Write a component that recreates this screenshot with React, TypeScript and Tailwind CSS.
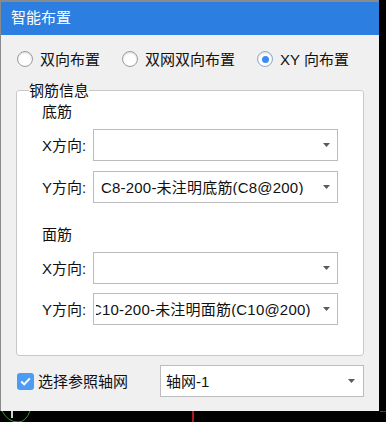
import React from "react";

const font = { fontFamily: '"Liberation Sans", "Noto Sans CJK SC", sans-serif' };

function Arrow() {
  return (
    <svg width="7" height="4" viewBox="0 0 7 4" className="shrink-0">
      <path d="M0 0 L7 0 L3.5 4 Z" fill="#5a5a5a" />
    </svg>
  );
}

function Select({ value, clip }: { value?: string; clip?: boolean }) {
  return (
    <div className="flex h-[32px] w-[245px] items-center border border-[#bcbcbc] bg-white pr-[7px]">
      <div className={`flex-1 overflow-hidden whitespace-nowrap text-[15px] leading-none tracking-[0.2px] text-[#111] ${clip ? "ml-[2px]" : "pl-[7px]"}`}>
        <span className={clip ? "-ml-[5px] inline-block" : ""}>{value}</span>
      </div>
      <Arrow />
    </div>
  );
}

function Radio({ checked, label, className }: { checked?: boolean; label: string; className?: string }) {
  return (
    <div className={`flex items-center gap-[7px] ${className ?? ""}`}>
      <div
        className={`flex h-[16px] w-[16px] items-center justify-center rounded-full border bg-white shadow-[inset_0_1px_2px_rgba(0,0,0,0.15)] ${
          checked ? "border-[#8fa9c9]" : "border-[#9c9c9c]"
        }`}
      >
        {checked && <div className="h-[7px] w-[7px] rounded-full bg-[#3b8cf2]" />}
      </div>
      <span className="text-[15px] leading-none text-[#111]">{label}</span>
    </div>
  );
}

function Row({ label, value, clip }: { label: string; value?: string; clip?: boolean }) {
  return (
    <div className="flex items-center">
      <span className="w-[51px] text-[15px] leading-none text-[#111]">{label}</span>
      <Select value={value} clip={clip} />
    </div>
  );
}

export default function App() {
  return (
    <div className="relative h-[422px] w-[386px] overflow-hidden bg-black" style={font}>
      <div className="flex h-[411px] w-[379px] flex-col border-l border-[#8a8a8a] bg-[#f0f0f0]">
        <div className="h-[2px] bg-[#8a8a8a]" />
        <div className="flex h-[33px] items-center bg-[#2c7fe0] pl-[10px] text-[15px] text-white">智能布置</div>
        <div className="flex h-[48px] items-center pl-[16px]">
          <Radio label="双向布置" />
          <Radio label="双网双向布置" className="ml-[22px]" />
          <Radio checked label="XY 向布置" className="ml-[22px]" />
        </div>
        <fieldset className="ml-[15px] h-[273px] w-[348px] rounded-[3px] border border-[#c9c9c9] bg-white pl-[25px]">
          <legend className="-ml-[13px] bg-transparent px-0 text-[15px] leading-none text-[#111]">钢筋信息</legend>
          <div className="flex flex-col">
            <div className="mt-[6px] text-[15px] leading-none text-[#111]">底筋</div>
            <div className="mt-[10px] flex flex-col gap-[10px]">
              <Row label="X方向:" />
              <Row label="Y方向:" value="C8-200-未注明底筋(C8@200)" />
            </div>
            <div className="mt-[24px] text-[15px] leading-none text-[#111]">面筋</div>
            <div className="mt-[10px] flex flex-col gap-[9px]">
              <Row label="X方向:" />
              <Row label="Y方向:" value="C10-200-未注明面筋(C10@200)" clip />
            </div>
          </div>
        </fieldset>
        <div className="mt-[9px] flex items-center pl-[16px]">
          <div className="flex h-[17px] w-[17px] items-center justify-center rounded-[3px] bg-[#4c9cf3]">
            <svg width="11" height="9" viewBox="0 0 11 9">
              <path d="M1.2 4.6 L4.2 7.4 L9.8 1.4" fill="none" stroke="white" strokeWidth="2" />
            </svg>
          </div>
          <span className="ml-[4px] text-[15px] leading-none text-[#111]">选择参照轴网</span>
          <div className="ml-[32px] flex h-[32px] w-[204px] items-center border border-[#bcbcbc] bg-white pl-[5px] pr-[8px]">
            <span className="flex-1 text-[15px] leading-none text-[#111]">轴网-1</span>
            <Arrow />
          </div>
        </div>
      </div>
      <svg className="absolute left-0 top-[411px]" width="386" height="11" viewBox="0 0 386 11">
        <path d="M2 0 Q8 11 18 11 Q26 11 30 0" fill="none" stroke="#2f9a2f" strokeWidth="1" />
        <line x1="12" y1="0" x2="12" y2="7" stroke="#d0d0d0" strokeWidth="2" />
        <line x1="193" y1="0" x2="193" y2="11" stroke="#b01818" strokeWidth="2" />
        <line x1="380" y1="0" x2="386" y2="0" stroke="#b01818" strokeWidth="2" />
      </svg>
    </div>
  );
}
